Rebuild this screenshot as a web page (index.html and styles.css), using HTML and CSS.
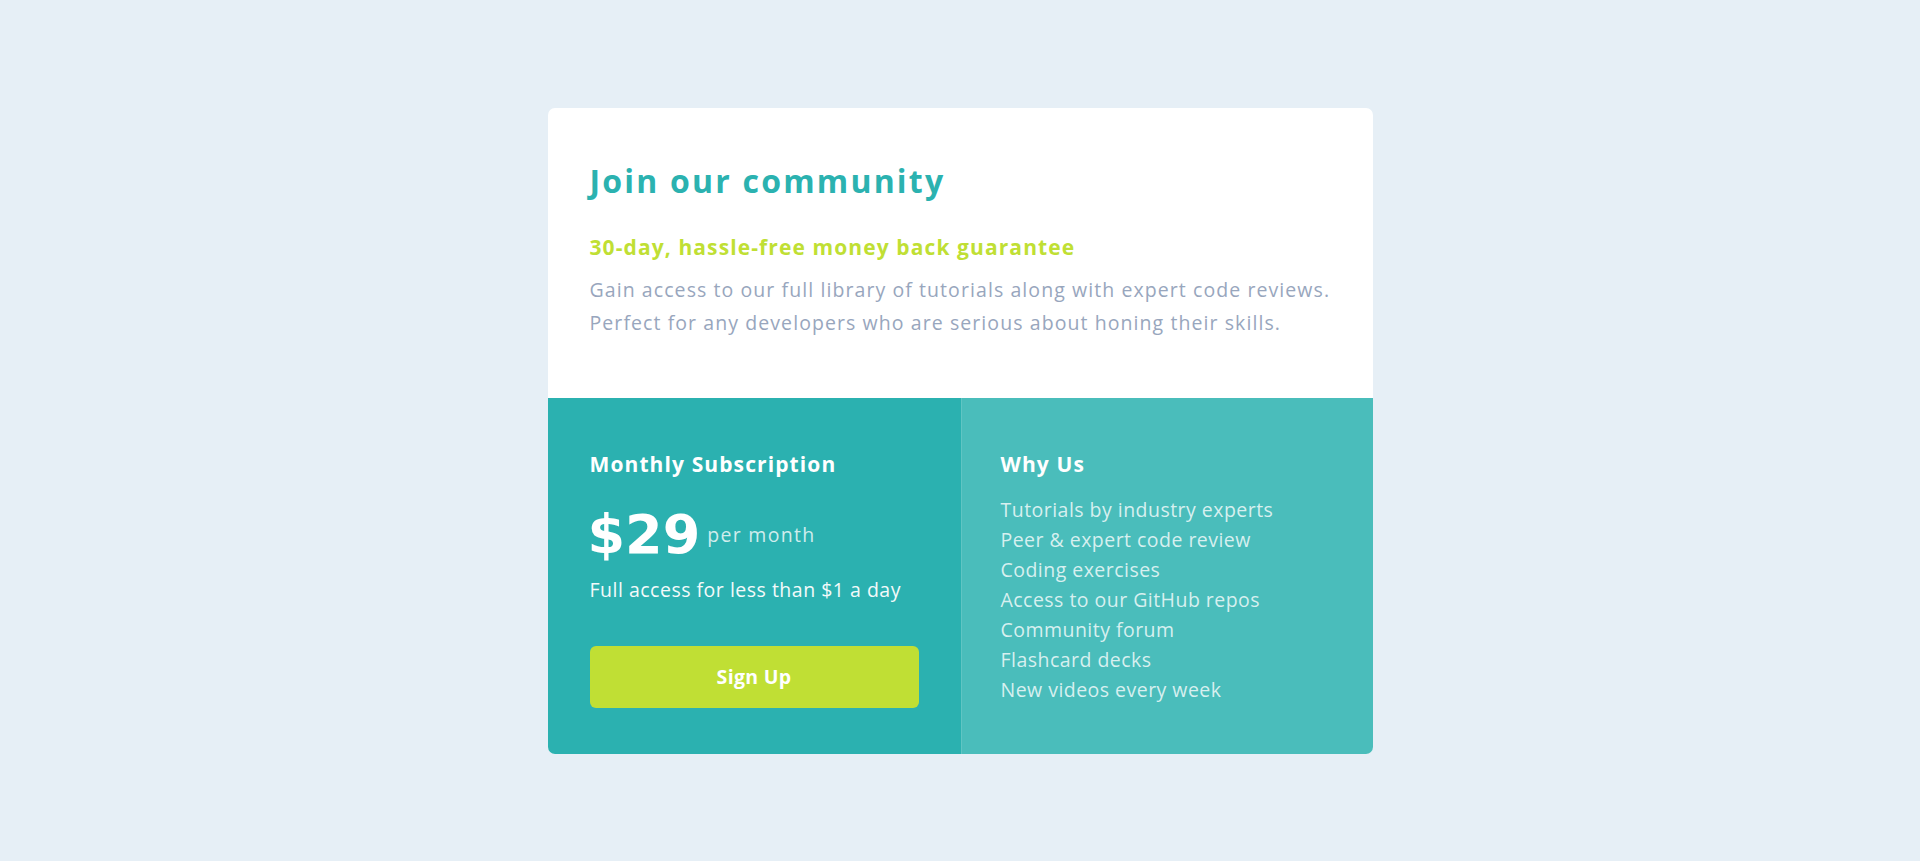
FILE: index.html
```html
<!DOCTYPE html>
<html lang="en">
<head>
<meta charset="utf-8">
<title>Single price grid</title>
<link rel="stylesheet" href="styles.css">
</head>
<body>
<main class="card">
  <section class="intro">
    <h1 class="title">Join our community</h1>
    <h2 class="guarantee">30-day, hassle-free money back guarantee</h2>
    <p class="desc">Gain access to our full library of tutorials along with expert code reviews.<br>Perfect for any developers who are serious about honing their skills.</p>
  </section>
  <div class="grid">
    <section class="sub">
      <h3 class="heading">Monthly Subscription</h3>
      <div class="price-row">
        <span class="price">$29</span>
        <span class="per">per month</span>
      </div>
      <p class="access">Full access for less than $1 a day</p>
      <button class="signup" type="button">Sign Up</button>
    </section>
    <section class="why">
      <h3 class="heading">Why Us</h3>
      <ul class="reasons">
        <li>Tutorials by industry experts</li>
        <li>Peer &amp; expert code review</li>
        <li>Coding exercises</li>
        <li>Access to our GitHub repos</li>
        <li>Community forum</li>
        <li>Flashcard decks</li>
        <li>New videos every week</li>
      </ul>
    </section>
  </div>
</main>
</body>
</html>
```

FILE: styles.css
```css
* { box-sizing: border-box; }
html, body { margin: 0; padding: 0; }
body {
  background: #e6eff6;
  font-family: "Open Sans", "Lato", "Liberation Sans", sans-serif;
  min-height: 100vh;
  display: flex;
  align-items: center;
  justify-content: center;
}
.card {
  width: 825px;
  background: #ffffff;
  border-radius: 7px;
  overflow: hidden;
}
.intro {
  padding: 53px 24px 58px 42px;
  height: 290px;
}
.title {
  margin: 0;
  font-size: 32px;
  line-height: 40px;
  font-weight: 700;
  letter-spacing: 2.2px;
  color: #2bb2b0;
}
.guarantee {
  margin: 31px 0 0;
  font-size: 21px;
  line-height: 30px;
  font-weight: 700;
  letter-spacing: 1.1px;
  color: #c0df34;
}
.desc {
  margin: 11px 0 0;
  font-size: 19.5px;
  line-height: 33.3px;
  letter-spacing: 1.08px;
  color: #98a6bd;
}
.grid {
  display: grid;
  grid-template-columns: 413px 1fr;
  height: 356px;
}
.sub {
  background: #2bb1b0;
  padding: 51px 42px 44px;
  color: #ffffff;
}
.why {
  background: #4abdbb;
  padding: 51px 42px 44px 39px;
  color: #ffffff;
  border-left: 1px solid rgba(255, 255, 255, 0.12);
}
.heading {
  margin: 0;
  font-size: 21px;
  line-height: 30px;
  font-weight: 700;
  letter-spacing: 1.1px;
}
.price-row {
  margin-top: 26px;
  height: 60px;
  display: flex;
  align-items: center;
  gap: 7px;
}
.price {
  font-family: "DejaVu Sans", "Open Sans", sans-serif;
  font-size: 54px;
  line-height: 60px;
  font-weight: 700;
  margin-left: -2px;
}
.per {
  font-size: 19.5px;
  line-height: 26px;
  letter-spacing: 1.3px;
  color: rgba(255, 255, 255, 0.78);
}
.access {
  margin: 11px 0 0;
  font-size: 19.5px;
  line-height: 28px;
  letter-spacing: 0.5px;
  color: #f3fafa;
}
.signup {
  display: block;
  margin-top: 42px;
  width: 100%;
  height: 62px;
  border: 0;
  border-radius: 6px;
  background: #c0df34;
  color: #ffffff;
  font-family: inherit;
  font-size: 19.5px;
  font-weight: 700;
  letter-spacing: 0.3px;
  cursor: pointer;
}
.reasons {
  list-style: none;
  margin: 16.5px 0 0;
  padding: 0;
}
.reasons li {
  font-size: 19.5px;
  line-height: 30px;
  letter-spacing: 0.47px;
  color: rgba(255, 255, 255, 0.78);
}
```
